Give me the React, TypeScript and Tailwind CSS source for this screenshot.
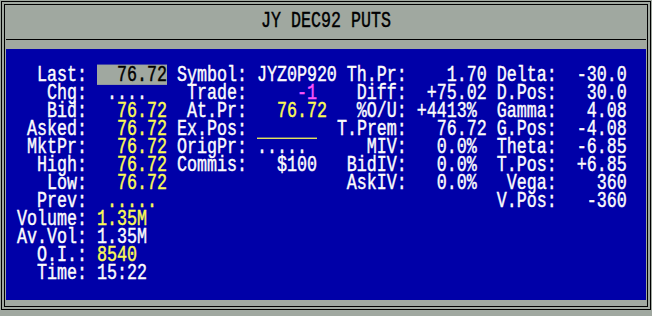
import React from 'react'

type Seg = { t: string; c: string; kind?: 'hl' | 'line' }

const W = 'text-[#fcfcfc]'
const Y = 'text-[#fcfc54]'
const M = 'text-[#fc54fc]'

const seg = (t: string, c: string = W): Seg => ({ t, c })

// one screen row: left label/value, middle label/value, then the two greek columns
const row = (
  a: string,
  av: Seg,
  b: string,
  bv: Seg | null,
  c: string,
  cv: string,
  d: string,
  dv: string
): Seg[] => {
  const out: Seg[] = [seg(a.padStart(7) + ' '), av]
  out.push(seg(' ' + (b ? b.padStart(7) : '       ') + ' '))
  out.push(bv ?? seg('        '))
  out.push(seg(c.padStart(7) + ' ' + cv.padStart(7) + ' ' + d.padStart(6) + ' ' + dv.padStart(6)))
  return out
}

const rows: Seg[][] = [
  row('Last:', { t: '  76.72', c: 'text-black', kind: 'hl' }, 'Symbol:', seg('JYZ0P920'), 'Th.Pr:', '1.70', 'Delta:', '-30.0'),
  row('Chg:', seg(' ....  '), 'Trade:', seg('    -1  ', M), 'Diff:', '+75.02', 'D.Pos:', '30.0'),
  row('Bid:', seg('  76.72', Y), 'At.Pr:', seg('  76.72 ', Y), '%O/U:', '+4413% ', 'Gamma:', '4.08'),
  row('Asked:', seg('  76.72', Y), 'Ex.Pos:', { t: '      ', c: Y, kind: 'line' }, 'T.Prem:', '76.72', 'G.Pos:', '-4.08'),
  row('MktPr:', seg('  76.72', Y), 'OrigPr:', seg('.....   '), 'MIV:', '0.0% ', 'Theta:', '-6.85'),
  row('High:', seg('  76.72', Y), 'Commis:', seg('  $100  '), 'BidIV:', '0.0% ', 'T.Pos:', '+6.85'),
  row('Low:', seg('  76.72', Y), '', null, 'AskIV:', '0.0% ', 'Vega:', '360'),
  row('Prev:', seg(' ..... ', Y), '', null, '', '', 'V.Pos:', '-360'),
  [seg('Volume: '), seg('1.35M', Y)],
  [seg('Av.Vol: '), seg('1.35M')],
  [seg('  O.I.: '), seg('8540', Y)],
  [seg('  Time: '), seg('15:22')],
]

const Line = ({ segs }: { segs: Seg[] }) => (
  <div className="h-[18px] leading-[18px] whitespace-pre scale-y-[1.27]">
    {segs.map((s, i) => {
      if (s.kind === 'hl') {
        return (
          <span key={i} className={`inline-block h-[16px] align-top bg-[#a0a8a0] ${s.c}`}>
            {s.t}
          </span>
        )
      }
      if (s.kind === 'line') {
        return (
          <React.Fragment key={i}>
            <span className="inline-block h-[15.5px] align-top border-b border-[#fcfc54]">{s.t}</span>
            <span>{'  '}</span>
          </React.Fragment>
        )
      }
      return (
        <span key={i} className={s.c}>
          {s.t}
        </span>
      )
    })}
  </div>
)

export default function App() {
  return (
    <div className="w-[652px] h-[316px] bg-[#a0a8a0] pt-px pl-px pr-px pb-[6px] font-['Liberation_Mono',monospace] text-[16.667px] [-webkit-text-stroke:0.35px]">
      <div className="h-full border border-black p-[2px]">
        <div className="h-full border border-black px-px flex flex-col">
          <div className="h-[34px] flex items-center justify-center">
            <div className="whitespace-pre scale-y-[1.27] text-black leading-[18px]">JY DEC92 PUTS</div>
          </div>
          <div className="h-px bg-black" />
          <div className="h-[9px]" />
          <div className="h-[251px] bg-[#0000a8] pt-[18px] pl-[11px]">
            {rows.map((r, i) => (
              <Line key={i} segs={r} />
            ))}
          </div>
        </div>
      </div>
    </div>
  )
}
